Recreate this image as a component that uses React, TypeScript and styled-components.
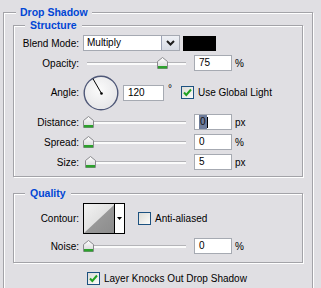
import styled, { createGlobalStyle } from "styled-components";

const GlobalStyle = createGlobalStyle`
  html, body {
    margin: 0;
    background: #e0dfe3;
    overflow: hidden;
  }
  body {
    font-family: "Liberation Sans", Arial, sans-serif;
    font-size: 10px;
    color: #000;
  }
`;

type SliderRow = { label: string; value: number; max: number; unit: string; selected?: boolean };

const structureSliders: SliderRow[] = [
  { label: "Distance:", value: 0, max: 30000, unit: "px", selected: true },
  { label: "Spread:", value: 0, max: 100, unit: "%" },
  { label: "Size:", value: 5, max: 250, unit: "px" },
];

export default function App() {
  return (
    <Page>
      <GlobalStyle />
      <Outer>
        <Title $offset={12} $pad={4}>Drop Shadow</Title>

        <Group $space={6}>
          <Title $offset={11} $pad={5}>Structure</Title>
          <Rows>
            <Row>
              <Label>Blend Mode:</Label>
              <Combo>
                <ComboText>Multiply</ComboText>
                <ComboButton>
                  <svg width="9" height="6" viewBox="0 0 9 6">
                    <path d="M1 1 L4.5 4.5 L8 1" fill="none" stroke="#1d1d1d" strokeWidth="2" />
                  </svg>
                </ComboButton>
              </Combo>
              <Swatch />
            </Row>
            <Row>
              <Label>Opacity:</Label>
              <Slider value={75} max={100} />
              <Field>75</Field>
              <Unit>%</Unit>
            </Row>
            <Row $h={35}>
              <Label>Angle:</Label>
              <Dial>
                <svg width="36" height="36" viewBox="0 0 36 36">
                  <defs>
                    <radialGradient id="dialFill" cx="45%" cy="40%" r="60%">
                      <stop offset="0%" stopColor="#fbfbfb" />
                      <stop offset="100%" stopColor="#e6e6e8" />
                    </radialGradient>
                  </defs>
                  <circle cx="18" cy="18" r="16.8" fill="url(#dialFill)" stroke="#4f5878" strokeWidth="1.4" />
                  <line x1="18.5" y1="18.5" x2="10" y2="3.8" stroke="#000" strokeWidth="1" />
                  <circle cx="18.5" cy="18.5" r="1.3" fill="#000" />
                </svg>
              </Dial>
              <Field $w={41}>120</Field>
              <Degree>°</Degree>
              <Check $checked $gap={9} />
              <CheckText>Use Global Light</CheckText>
            </Row>
            {structureSliders.map((s) => (
              <Row key={s.label}>
                <Label>{s.label}</Label>
                <Slider value={s.value} max={s.max} />
                <Field>
                  {s.selected ? (
                    <>
                      <Selected>0</Selected>
                      <Caret />
                    </>
                  ) : (
                    s.value
                  )}
                </Field>
                <Unit>{s.unit}</Unit>
              </Row>
            ))}
          </Rows>
        </Group>

        <Group $space={16} $bottom={8}>
          <Title $offset={11} $pad={5}>Quality</Title>
          <Rows>
            <Row $h={31}>
              <Label>Contour:</Label>
              <Contour>
                <ContourCurve>
                  <svg width="30" height="29" viewBox="0 0 30 29">
                    <defs>
                      <linearGradient id="upper" x1="0" y1="0" x2="1" y2="1">
                        <stop offset="0%" stopColor="#f2f2f2" />
                        <stop offset="100%" stopColor="#d2d2d2" />
                      </linearGradient>
                      <linearGradient id="lower" x1="0" y1="0" x2="1" y2="1">
                        <stop offset="0%" stopColor="#a4a4a4" />
                        <stop offset="100%" stopColor="#8c8c8c" />
                      </linearGradient>
                    </defs>
                    <rect width="30" height="29" fill="url(#upper)" />
                    <path d="M0 29 L30 1 L30 29 Z" fill="url(#lower)" />
                  </svg>
                </ContourCurve>
                <ContourArrow>
                  <svg width="5" height="3" viewBox="0 0 5 3">
                    <path d="M0 0 H5 L2.5 3 Z" fill="#000" />
                  </svg>
                </ContourArrow>
              </Contour>
              <Check $gap={13} />
              <CheckText>Anti-aliased</CheckText>
            </Row>
            <Row>
              <Label>Noise:</Label>
              <Slider value={0} max={100} />
              <Field>0</Field>
              <Unit>%</Unit>
            </Row>
          </Rows>
        </Group>

        <Footer>
          <Check $checked />
          <CheckText>Layer Knocks Out Drop Shadow</CheckText>
        </Footer>
      </Outer>
    </Page>
  );
}

function Slider({ value, max }: { value: number; max: number }) {
  return (
    <SliderBox>
      <Track />
      <Thumb style={{ left: Math.round((value / max) * 99) }}>
        <svg width="11" height="12" viewBox="0 0 11 12">
          <defs>
            <linearGradient id="thumbFill" x1="0" y1="0" x2="0" y2="1">
              <stop offset="0%" stopColor="#ffffff" />
              <stop offset="100%" stopColor="#d4d4d6" />
            </linearGradient>
          </defs>
          <path d="M0.5 4.5 L5.5 0.5 L10.5 4.5 L10.5 11.5 L0.5 11.5 Z" fill="url(#thumbFill)" stroke="#8a8a8e" />
          <rect x="1" y="9" width="9" height="2.5" fill="#2da12d" />
        </svg>
      </Thumb>
    </SliderBox>
  );
}

function Check({ $checked, $gap }: { $checked?: boolean; $gap?: number }) {
  return (
    <CheckBox $gap={$gap}>
      {$checked && (
        <svg width="11" height="11" viewBox="0 0 11 11">
          <path d="M2 5.5 L4.3 8 L9 2.5" fill="none" stroke="#21a121" strokeWidth="2" />
        </svg>
      )}
    </CheckBox>
  );
}

const Page = styled.div`
  padding: 12px 0 0 3px;
`;

const etched = `
  border: 1px solid #a3a3a8;
  box-shadow: 1px 1px 0 #fff, inset 1px 1px 0 #fff;
`;

const Outer = styled.section`
  ${etched}
  width: 310px;
  box-sizing: border-box;
  padding-bottom: 40px;
`;

const Title = styled.div<{ $offset: number; $pad: number }>`
  width: fit-content;
  height: 13px;
  margin: -7px 0 0 ${(p) => p.$offset}px;
  padding: 0 ${(p) => p.$pad}px;
  background: #e0dfe3;
  color: #0046d5;
  font-weight: bold;
  font-size: 10.5px;
  line-height: 13px;
`;

const Group = styled.section<{ $space: number; $bottom?: number }>`
  ${etched}
  margin: ${(p) => p.$space}px 9px 0 9px;
  padding-bottom: ${(p) => p.$bottom ?? 6}px;
`;

const Rows = styled.div`
  display: flex;
  flex-direction: column;
  gap: 4px;
  margin-top: 3px;
`;

const Row = styled.div<{ $h?: number }>`
  display: flex;
  align-items: center;
  height: ${(p) => p.$h ?? 16}px;
`;

const Label = styled.span`
  width: 65px;
  margin-right: 4px;
  text-align: right;
  white-space: nowrap;
`;

const Combo = styled.div`
  display: flex;
  width: 97px;
  height: 16px;
  box-sizing: border-box;
  border: 1px solid #a5a9b2;
  background: #fff;
`;

const ComboText = styled.span`
  flex: 1;
  padding-left: 3px;
  line-height: 14px;
`;

const ComboButton = styled.span`
  width: 17px;
  display: flex;
  align-items: center;
  justify-content: center;
  background: linear-gradient(#eef0f5, #d7dbe4);
  border-left: 1px solid #9ba2b4;
`;

const Swatch = styled.div`
  width: 33px;
  height: 15px;
  margin-left: 3px;
  background: #000;
`;

const SliderBox = styled.div`
  position: relative;
  width: 104px;
  height: 16px;
  display: flex;
  align-items: center;
`;

const Track = styled.div`
  flex: 1;
  margin: 1px 1px 0 4px;
  height: 2px;
  border-top: 1px solid #b4b4b8;
  background: #fbfbfb;
`;

const Thumb = styled.div`
  position: absolute;
  top: 2px;
  width: 11px;
  height: 12px;
  display: flex;
`;

const Field = styled.div<{ $w?: number }>`
  width: ${(p) => p.$w ?? 38}px;
  height: 16px;
  margin-left: 7px;
  box-sizing: border-box;
  border: 1px solid #a6aab2;
  background: #fff;
  padding-left: 4px;
  line-height: 14px;
  display: flex;
  align-items: center;
`;

const Selected = styled.span`
  background: #6f7d9c;
  color: #101010;
  padding: 0 1px;
`;

const Caret = styled.span`
  width: 1px;
  height: 11px;
  background: #000;
`;

const Unit = styled.span`
  margin-left: 3px;
`;

const Dial = styled.div`
  width: 36px;
  height: 36px;
  margin-right: -3px;
  display: flex;
`;

const Degree = styled.span`
  margin-left: 4px;
  align-self: flex-start;
  margin-top: 8px;
`;

const CheckBox = styled.span<{ $gap?: number }>`
  width: 13px;
  height: 13px;
  box-sizing: border-box;
  margin-left: ${(p) => p.$gap ?? 0}px;
  border: 1px solid #1c5180;
  background: linear-gradient(135deg, #dcdcd7, #fbfbf9);
  display: flex;
  align-items: center;
  justify-content: center;
`;

const CheckText = styled.span`
  margin-left: 4px;
  white-space: nowrap;
`;

const Contour = styled.div`
  display: flex;
  width: 42px;
  height: 31px;
  box-sizing: border-box;
  border: 1px solid #000;
  background: #fff;
`;

const ContourCurve = styled.div`
  width: 30px;
  display: flex;
  border-right: 1px solid #000;
`;

const ContourArrow = styled.div`
  flex: 1;
  display: flex;
  align-items: center;
  justify-content: center;
`;

const Footer = styled.div`
  display: flex;
  align-items: center;
  height: 15px;
  margin: 8px 0 0 83px;
`;
